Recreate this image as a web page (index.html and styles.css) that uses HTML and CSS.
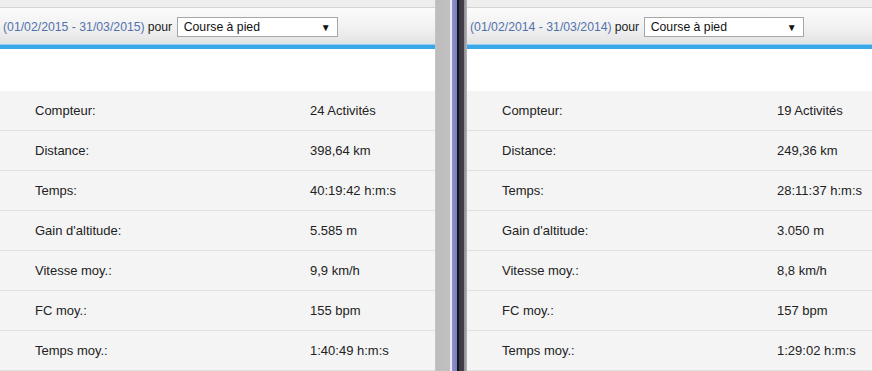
FILE: index.html
```html
<!DOCTYPE html>
<html lang="fr">
<head>
<meta charset="utf-8">
<link rel="stylesheet" href="styles.css">
</head>
<body>
<div class="page">
  <section class="panel panel-left">
    <div class="topstrip"></div>
    <div class="header">
      <span class="range">(01/02/2015 - 31/03/2015)</span>
      <span class="pour">pour</span>
      <div class="select"><span>Course à pied</span><span class="arrow">▼</span></div>
    </div>
    <div class="gap"></div>
    <div class="row"><span class="label">Compteur:</span><span class="value">24 Activités</span></div>
    <div class="row"><span class="label">Distance:</span><span class="value">398,64 km</span></div>
    <div class="row"><span class="label">Temps:</span><span class="value">40:19:42 h:m:s</span></div>
    <div class="row"><span class="label">Gain d'altitude:</span><span class="value">5.585 m</span></div>
    <div class="row"><span class="label">Vitesse moy.:</span><span class="value">9,9 km/h</span></div>
    <div class="row"><span class="label">FC moy.:</span><span class="value">155 bpm</span></div>
    <div class="row"><span class="label">Temps moy.:</span><span class="value">1:40:49 h:m:s</span></div>
  </section>
  <div class="divider"></div>
  <section class="panel panel-right">
    <div class="topstrip"></div>
    <div class="header">
      <span class="range">(01/02/2014 - 31/03/2014)</span>
      <span class="pour">pour</span>
      <div class="select"><span>Course à pied</span><span class="arrow">▼</span></div>
    </div>
    <div class="gap"></div>
    <div class="row"><span class="label">Compteur:</span><span class="value">19 Activités</span></div>
    <div class="row"><span class="label">Distance:</span><span class="value">249,36 km</span></div>
    <div class="row"><span class="label">Temps:</span><span class="value">28:11:37 h:m:s</span></div>
    <div class="row"><span class="label">Gain d'altitude:</span><span class="value">3.050 m</span></div>
    <div class="row"><span class="label">Vitesse moy.:</span><span class="value">8,8 km/h</span></div>
    <div class="row"><span class="label">FC moy.:</span><span class="value">157 bpm</span></div>
    <div class="row"><span class="label">Temps moy.:</span><span class="value">1:29:02 h:m:s</span></div>
  </section>
</div>
</body>
</html>
```

FILE: styles.css
```css
* { box-sizing: border-box; }
html, body {
  margin: 0;
  padding: 0;
  background: #ffffff;
  overflow: hidden;
}
body {
  font-family: "Liberation Sans", Arial, sans-serif;
  font-size: 13px;
  color: #222;
  width: 872px;
  height: 371px;
}
.page {
  display: flex;
  height: 371px;
}
.panel {
  display: flex;
  flex-direction: column;
  background: #fff;
}
.panel-left {
  width: 436px;
  border-right: 1px solid #c4c4c4;
}
.panel-right {
  flex: 1;
}
.divider {
  width: 31px;
  flex: none;
  background: linear-gradient(to right,
    #bdbdbd 0, #c0c0c0 14px,
    #e8e8f4 14px, #e8e8f4 16px,
    #8c90cc 16px, #7a7fb8 21px,
    #15151f 21px, #15151f 23px,
    #3b3744 23px, #45404e 28px,
    #8c8b92 28px, #b4b4b8 31px);
}
.topstrip {
  height: 8px;
  background: #eeeeee;
  border-bottom: 1px solid #d4d4d4;
}
.header {
  height: 41px;
  display: flex;
  align-items: center;
  padding: 0 0 0 3px;
  gap: 3px;
  font-size: 12.25px;
  background: linear-gradient(to bottom, #fbfbfb 0%, #f2f2f2 50%, #e2e2e2 100%);
  border-bottom: 4px solid #3aa8e6;
  box-shadow: inset 0 -1px 0 #8fd0f4;
}
.range {
  color: #5272ac;
}
.pour {
  color: #222;
}
.select {
  margin-left: 1.5px;
  width: 161px;
  height: 20px;
  background: #fff;
  border: 1px solid #a6a6a6;
  display: flex;
  align-items: center;
  justify-content: space-between;
  padding: 0 6px 0 6px;
  color: #111;
  margin-top: 1px;
}
.panel-right .select { width: 160px; }
.arrow {
  font-size: 10px;
  color: #111;
}
.gap {
  height: 42px;
  background: #fff;
}
.row {
  height: 40px;
  display: flex;
  align-items: center;
  padding-left: 35px;
  background: #f4f4f4;
  border-bottom: 1px solid #e0e0e0;
  color: #222;
}
.label {
  width: 275px;
  flex: none;
}
.value {
  flex: none;
}
```
